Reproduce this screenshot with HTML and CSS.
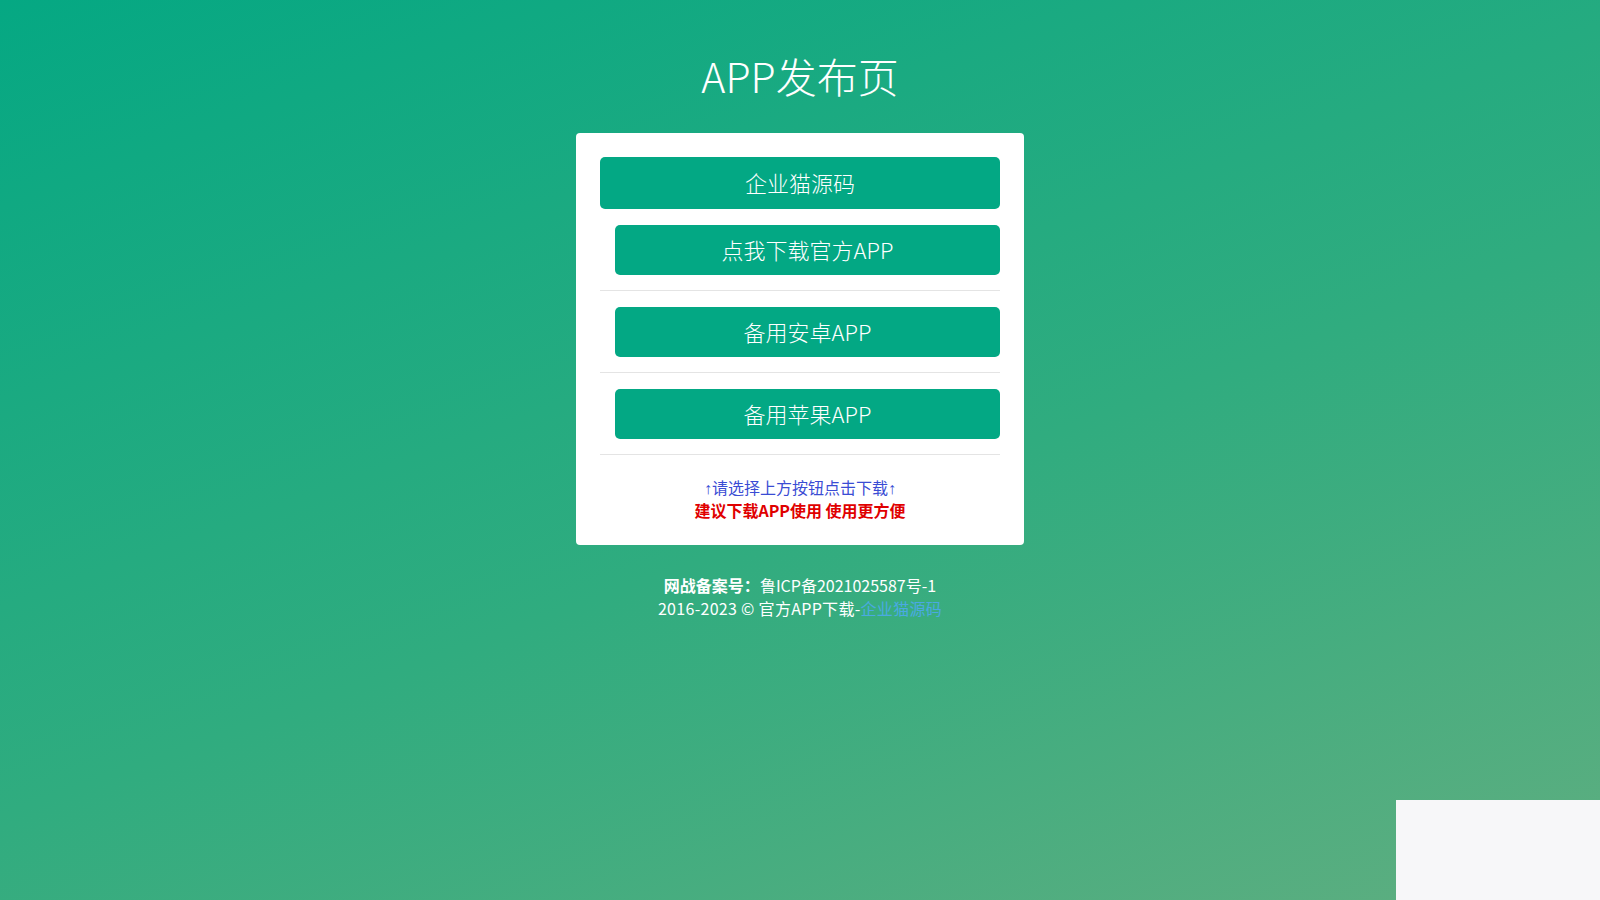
FILE: index.html
```html
<!DOCTYPE html>
<html lang="zh-CN">
<head>
<meta charset="utf-8">
<title>APP发布页</title>
<link rel="stylesheet" href="styles.css">
</head>
<body>
<div class="page">
  <h1 class="title">APP发布页</h1>
  <div class="card">
    <a class="btn btn-main" href="#">企业猫源码</a>
    <div class="list">
      <div class="item"><a class="btn" href="#">点我下载官方APP</a></div>
      <hr class="sep">
      <div class="item"><a class="btn" href="#">备用安卓APP</a></div>
      <hr class="sep">
      <div class="item"><a class="btn" href="#">备用苹果APP</a></div>
      <hr class="sep">
    </div>
    <p class="tip"><span class="arrow">↑</span>请选择上方按钮点击下载<span class="arrow">↑</span></p>
    <p class="warn">建议下载APP使用 使用更方便</p>
  </div>
  <div class="footer">
    <p><b>网战备案号：</b>鲁ICP备2021025587号-1</p>
    <p class="copy">2016-2023 © 官方APP下载-<a class="link" href="#">企业猫源码</a></p>
  </div>
</div>
<div class="corner"></div>
</body>
</html>
```
FILE: styles.css
```css
html, body {
  margin: 0;
  padding: 0;
  height: 100%;
}
body {
  background: linear-gradient(160deg, #05a883 0%, #30ac7f 55%, #5fae80 100%);
  font-family: "Noto Sans CJK SC", "Noto Sans", sans-serif;
  color: #fff;
  overflow: hidden;
}
.page {
  display: flex;
  flex-direction: column;
  align-items: center;
  padding-top: 51px;
}
.title {
  margin: 0;
  font-size: 41px;
  font-weight: 300;
  line-height: 48px;
}
.card {
  margin-top: 34px;
  width: 400px;
  padding: 24px 24px 24px;
  background: #fff;
  border-radius: 4px;
  display: flex;
  flex-direction: column;
}
.btn {
  display: flex;
  align-items: center;
  justify-content: center;
  height: 47px;
  padding-bottom: 3px;
  background: #03a884;
  color: #fff;
  border-radius: 5px;
  text-decoration: none;
  font-size: 22px;
  font-weight: 300;
}
.btn-main {
  height: 49px;
}
.list {
  display: flex;
  flex-direction: column;
  margin-top: 16px;
}
.item {
  padding-left: 15px;
}
.sep {
  border: 0;
  border-top: 1px solid #e4e4e4;
  margin: 15px 0 16px;
}
.list .sep:last-child {
  margin-bottom: 0;
}
.tip {
  margin: 22px 0 0;
  text-align: center;
  font-size: 16px;
  line-height: 21px;
  color: #3a4cd4;
}
.arrow {
  font-family: "Liberation Sans", sans-serif;
  font-size: 16px;
}
.warn {
  margin: 0;
  text-align: center;
  font-size: 16px;
  line-height: 22px;
  color: #e00000;
  font-weight: 700;
}
.footer {
  margin-top: 29px;
  text-align: center;
  font-size: 16px;
  line-height: 22.5px;
}
.footer p {
  margin: 0;
}
.copy {
  letter-spacing: 0.3px;
}
.link {
  color: #4aa9e2;
  text-decoration: none;
}
.corner {
  position: fixed;
  right: 0;
  bottom: 0;
  width: 204px;
  height: 100px;
  background: #f7f7f9;
}
```
